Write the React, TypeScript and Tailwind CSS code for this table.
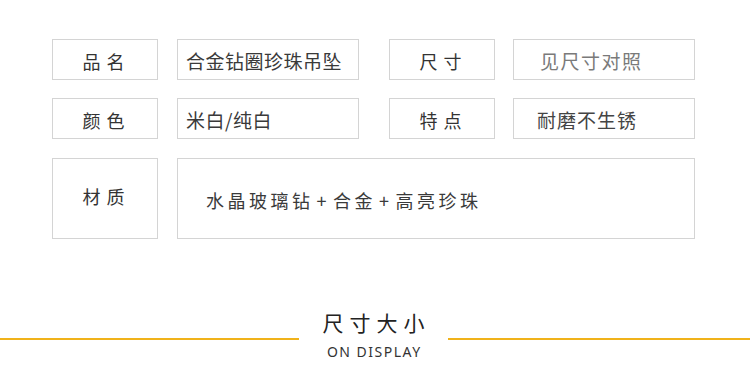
import React from "react";

const cjk = { fontFamily: '"Noto Sans CJK SC", "Noto Sans", sans-serif' };

function Label({ text }: { text: string }) {
  return (
    <div className="w-[106px] h-full shrink-0 border border-[#d4d4d4] flex items-center justify-center pt-[3px] pl-[3px] text-[18px] tracking-[6px] text-[#333]">
      {text}
    </div>
  );
}

function Value({
  children,
  className = "",
}: {
  children: React.ReactNode;
  className?: string;
}) {
  return (
    <div
      className={`h-full shrink-0 border border-[#d4d4d4] flex items-center pt-[3px] ${className}`}
    >
      {children}
    </div>
  );
}

function Plus() {
  return <span className="mx-[3px]">+</span>;
}

export default function App() {
  return (
    <div
      className="w-[750px] h-[369px] bg-white overflow-hidden flex flex-col"
      style={cjk}
    >
      <div className="pt-[39px] pl-[52px] flex flex-col">
        <div className="flex h-[41px]">
          <Label text="品名" />
          <Value className="ml-[19px] w-[182px] pl-[8px] text-[19px] tracking-[0.5px] text-[#3a3a3a]">
            合金钻圈珍珠吊坠
          </Value>
          <div className="ml-[30px] h-full flex">
            <Label text="尺寸" />
          </div>
          <Value className="ml-[18px] w-[182px] pl-[26px] text-[19px] tracking-[1.5px] text-[#7a7a7a]">
            见尺寸对照
          </Value>
        </div>
        <div className="flex h-[41px] mt-[18px]">
          <Label text="颜色" />
          <Value className="ml-[19px] w-[182px] pl-[8px] text-[19px] tracking-[0.5px] text-[#3a3a3a]">
            米白/纯白
          </Value>
          <div className="ml-[30px] h-full flex">
            <Label text="特点" />
          </div>
          <Value className="ml-[18px] w-[182px] pl-[23px] text-[19px] tracking-[1px] text-[#444]">
            耐磨不生锈
          </Value>
        </div>
        <div className="flex h-[81px] mt-[19px]">
          <div className="w-[106px] h-full shrink-0 border border-[#d4d4d4] flex justify-center pt-[24px] pl-[3px] text-[18px] tracking-[6px] text-[#333]">
            材质
          </div>
          <Value className="ml-[19px] w-[518px] pl-[28px] text-[18px] tracking-[3.5px] text-[#3a3a3a]">
            水晶玻璃钻
            <Plus />
            合金
            <Plus />
            高亮珍珠
          </Value>
        </div>
      </div>

      <div className="mt-[70px] flex items-start">
        <div className="mt-[29px] flex-1 h-[2px] bg-[#f0b21a]" />
        <div className="w-[149px] shrink-0 flex flex-col items-center">
          <div className="text-[21px] leading-[26px] tracking-[6px] pl-[6px] text-[#222]">
            尺寸大小
          </div>
          <div
            className="mt-[8px] text-[14px] leading-[18px] tracking-[1.5px] pl-[1.5px] text-[#333]"
            style={{ fontFamily: '"Noto Sans", sans-serif' }}
          >
            ON DISPLAY
          </div>
        </div>
        <div className="mt-[29px] w-[302px] h-[2px] bg-[#f0b21a]" />
      </div>
    </div>
  );
}
